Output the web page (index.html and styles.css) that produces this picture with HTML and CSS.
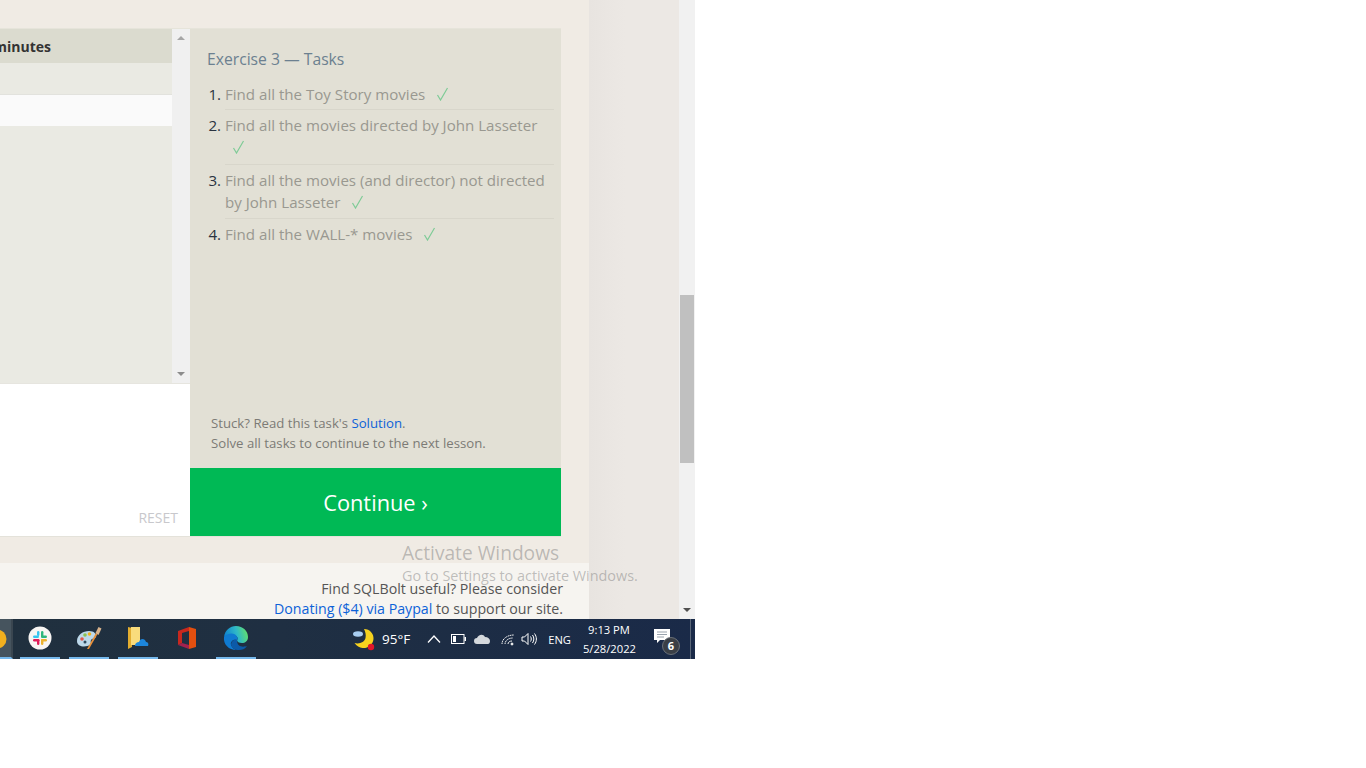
FILE: index.html
```html
<!DOCTYPE html>
<html lang="en">
<head>
    <meta charset="UTF-8">
    <title>SQLBolt - Exercise 3</title>
    <link rel="stylesheet" href="styles.css">
</head>
<body>
    <div class="screen">
        <div class="browser">
            <div class="page">
                <div class="main">
                    <div class="exercise">
                        <div class="left">
                            <div class="viewer">
                                <div class="results">
                                    <div class="results-head"><b>Length_minutes</b></div>
                                    <div class="results-row"></div>
                                    <div class="results-row white"></div>
                                    <div class="results-rest"></div>
                                </div>
                                <div class="mini-scroll">
                                    <span class="arrow up small"></span>
                                    <span class="arrow down small"></span>
                                </div>
                            </div>
                            <div class="editor"><span class="reset">RESET</span></div>
                        </div>
                        <div class="tasks">
                            <div class="tasks-body">
                                <h3>Exercise 3 — Tasks</h3>
                                <ol>
                                    <li>Find all the Toy Story movies <svg class="check" width="13" height="14" viewBox="0 0 13 14"><path d="M1.500 8l3 5L11.500 1" fill="none" stroke="#7ecb96" stroke-width="1.200"/></svg></li>
                                    <li>Find all the movies directed by John Lasseter <svg class="check" width="13" height="14" viewBox="0 0 13 14"><path d="M1.500 8l3 5L11.500 1" fill="none" stroke="#7ecb96" stroke-width="1.200"/></svg></li>
                                    <li>Find all the movies (and director) not directed by John Lasseter <svg class="check" width="13" height="14" viewBox="0 0 13 14"><path d="M1.500 8l3 5L11.500 1" fill="none" stroke="#7ecb96" stroke-width="1.200"/></svg></li>
                                    <li class="last">Find all the WALL-* movies <svg class="check" width="13" height="14" viewBox="0 0 13 14"><path d="M1.500 8l3 5L11.500 1" fill="none" stroke="#7ecb96" stroke-width="1.200"/></svg></li>
                                </ol>
                                <div class="hint">
                                    <div>Stuck? Read this task's <a href="#">Solution</a>.</div>
                                    <div>Solve all tasks to continue to the next lesson.</div>
                                </div>
                            </div>
                            <a class="continue" href="#">Continue ›</a>
                        </div>
                    </div>
                    <div class="footer">
                        <div>Find SQLBolt useful? Please consider</div>
                        <div><a href="#">Donating ($4) via Paypal</a> to support our site.</div>
                    </div>
                </div>
                <div class="side"></div>
            </div>
            <div class="scrollbar">
                <div class="thumb"></div>
                <span class="arrow down"></span>
            </div>
            <div class="watermark">
                <div class="wm-title">Activate Windows</div>
                <div class="wm-sub">Go to Settings to activate Windows.</div>
            </div>
        </div>
        <div class="taskbar">
            <div class="active-app">
                <svg width="11" height="38" viewBox="0 0 11 38"><circle cx="-3" cy="20" r="9.500" fill="#f2b01e"/></svg>
            </div>
            <div class="app open">
                <svg width="26" height="26" viewBox="0 0 26 26">
                    <circle cx="13" cy="13" r="11.500" fill="#f8f5f3"/>
                    <rect x="6" y="10.500" width="6" height="2.400" rx="1.200" fill="#36c5f0"/>
                    <rect x="10" y="6" width="2.400" height="5" rx="1.200" fill="#36c5f0"/>
                    <rect x="14" y="6" width="2.400" height="6.500" rx="1.200" fill="#2eb67d"/>
                    <rect x="14" y="10.500" width="6" height="2.400" rx="1.200" fill="#2eb67d"/>
                    <rect x="14" y="14" width="6" height="2.400" rx="1.200" fill="#ecb22e"/>
                    <rect x="14" y="14" width="2.400" height="6" rx="1.200" fill="#ecb22e"/>
                    <rect x="6" y="14" width="6.400" height="2.400" rx="1.200" fill="#e01e5a"/>
                    <rect x="10" y="14" width="2.400" height="6" rx="1.200" fill="#e01e5a"/>
                </svg>
            </div>
            <div class="app open">
                <svg width="28" height="28" viewBox="0 0 28 28">
                    <path d="M2 17c0-6 6-10 12-10 5 0 8 3 7 6-1 2-4 1-5 3s1 3-1 5c-3 2-13 3-13-4z" fill="#bcd8ea"/>
                    <circle cx="7" cy="15" r="1.800" fill="#e2574c"/>
                    <circle cx="10" cy="11" r="1.800" fill="#8cc152"/>
                    <circle cx="14.500" cy="10" r="1.800" fill="#f2b01e"/>
                    <circle cx="10" cy="18" r="1.500" fill="#2d4a5e"/>
                    <path d="M12 25l9-16 1.500 1L14 25z" fill="#e8903a"/>
                    <path d="M20.500 9l3-6 3 1.500-3 6.500z" fill="#d9b38c"/>
                </svg>
            </div>
            <div class="app open">
                <svg width="22" height="24" viewBox="0 0 22 24">
                    <path d="M1 1l4 1v19l-4 2z" fill="#e3ad2f"/>
                    <path d="M4 1h9v18H4z" fill="#f9dc7c"/>
                    <path d="M8 20c0-3 2-4 4-4 1-4 6-4 7 0 2 0 3 2 2 4z" fill="#1c86dc"/>
                </svg>
            </div>
            <div class="app">
                <svg width="20" height="24" viewBox="0 0 20 24">
                    <path d="M1 5L12 1v4L5 7v10l-4 2z" fill="#c8281e"/>
                    <path d="M1 19l4-2 7 2v4z" fill="#a3214e"/>
                    <path d="M12 1l7 2v18l-7 2z" fill="#e34f0f"/>
                </svg>
            </div>
            <div class="app open">
                <svg width="26" height="26" viewBox="0 0 26 26">
                    <defs>
                        <linearGradient id="edgeTop" x1="0" y1="0.600" x2="1" y2="0.400">
                            <stop offset="0" stop-color="#0d7fd0"/>
                            <stop offset="0.550" stop-color="#2fb8c8"/>
                            <stop offset="1" stop-color="#62e06c"/>
                        </linearGradient>
                    </defs>
                    <path d="M1 12C2 5 7 1 13 1c7 0 12 5 12 11 0 4-3 6-6 6-3 0-5-1-5-3 1-1 1-2 0-3-2-3-9-3-13 0z" fill="url(#edgeTop)"/>
                    <path d="M1 12c3-4 11-5 13 0 1 1 1 2 0 3-3-1-7 1-6 5 1 3 4 5 7 5C7 26 0 20 1 12z" fill="#0f7ad1"/>
                    <path d="M14 15c-3-1-6 1-6 5 1 3 4 5 8 5 3 0 6-1 8-4-3 1-10 2-10-6z" fill="#0c5aa8"/>
                </svg>
            </div>
            <div class="tray">
                <svg class="moon" width="24" height="24" viewBox="0 0 24 24">
                    <path d="M13 2c6 0 10 5 9.500 10-.5 6-6 9.500-11 9-3-.3-6-2-8-5 5 1.500 10-1 11-5 .7-3 0-6-1.500-9z" fill="#f6d21f"/>
                    <ellipse cx="7" cy="7" rx="5" ry="2.800" fill="#a8cdf0"/>
                    <circle cx="20" cy="20" r="3.200" fill="#e0162b"/>
                </svg>
                <span class="temp">95°F</span>
                <svg class="chevron" width="14" height="8" viewBox="0 0 14 8"><path d="M1 7.500L7 1l6 6.500" fill="none" stroke="#fff" stroke-width="1.300"/></svg>
                <svg class="battery" width="15" height="10" viewBox="0 0 15 10">
                    <rect x="0.500" y="0.500" width="12.500" height="9" fill="none" stroke="#fff"/>
                    <rect x="2" y="2" width="3" height="6" fill="#fff"/>
                    <rect x="13.500" y="3" width="1.500" height="4" fill="#fff"/>
                </svg>
                <svg class="cloud" width="16" height="10" viewBox="0 0 16 10"><path d="M3 10a3 3 0 0 1 0-6c1-3 6-5 8-1 3 0 5 2 5 4s-1 3-2 3z" fill="#d4d8dc"/></svg>
                <svg class="wifi" width="14" height="14" viewBox="0 0 14 14" fill="none" stroke="#f2f2f2">
                    <path d="M1 12C1 7 6 3 13 3" stroke-dasharray="1.500 0.600"/>
                    <path d="M4 12c0-3 3-6 8-6" stroke-dasharray="1.500 0.600"/>
                    <path d="M7 12c0-2 2-3 4-3"/>
                    <circle cx="11" cy="12" r="1" fill="#fff"/>
                </svg>
                <svg class="speaker" width="16" height="14" viewBox="0 0 16 14" fill="none" stroke="#fff">
                    <path d="M1 5h2.500L7 1.500v11L3.500 9H1z"/>
                    <path d="M9.500 4.500c1 1.500 1 3.500 0 5M11.500 3c1.800 2.500 1.800 5.500 0 8M13.500 1.500c2.500 3.500 2.500 7.500 0 11"/>
                </svg>
                <span class="lang">ENG</span>
                <div class="clock">
                    <div>9:13 PM</div>
                    <div>5/28/2022</div>
                </div>
                <div class="notify">
                    <svg width="16" height="14" viewBox="0 0 16 14">
                        <path d="M0 0h16v11H6l-3 3v-3H0z" fill="#fff"/>
                        <path d="M3 3h10M3 5.500h10M3 8h7" stroke="#9aa3ad"/>
                    </svg>
                    <span class="badge">6</span>
                </div>
                <div class="show-desktop"></div>
            </div>
        </div>
    </div>
</body>
</html>
```

FILE: styles.css
```css
* {
    box-sizing: border-box;
}
html, body {
    margin: 0;
    background: #fff;
}
body {
    font-family: "Open Sans", sans-serif;
}
a {
    text-decoration: none;
    color: #0d62d8;
}
.screen {
    width: 695px;
    height: 659px;
    display: flex;
    flex-direction: column;
    overflow: hidden;
}
.browser {
    position: relative;
    height: 619px;
    display: flex;
    flex-shrink: 0;
}
.page {
    width: 679px;
    display: flex;
}
.main {
    width: 589px;
    display: flex;
    flex-direction: column;
    background: #f0ebe4;
}
.side {
    flex: 1;
    background: linear-gradient(to right, #e8e4e0, #ece8e4 40%);
}
.exercise {
    margin-top: 28px;
    width: 561px;
    height: 509px;
    flex-shrink: 0;
    display: flex;
    border-top: 1px solid #e6e4da;
    border-bottom: 1px solid #e4e2da;
}
.left {
    width: 190px;
    display: flex;
    flex-direction: column;
    background: #fff;
}
.viewer {
    height: 355px;
    display: flex;
    border-bottom: 1px solid #e6e5df;
}
.results {
    width: 172px;
    display: flex;
    flex-direction: column;
    overflow: hidden;
    background: #eaeae3;
}
.results-head {
    height: 34px;
    flex-shrink: 0;
    display: flex;
    justify-content: flex-end;
    align-items: center;
    padding-right: 121px;
    background: #dbdbcf;
    font-size: 14px;
    color: #333;
    white-space: nowrap;
}
.results-row {
    height: 31px;
    flex-shrink: 0;
}
.results-row.white {
    height: 32px;
    background: #fafafa;
    border-top: 1px solid #e2e2dd;
}
.results-rest {
    flex: 1;
}
.mini-scroll {
    width: 18px;
    background: #f0f0f0;
    display: flex;
    flex-direction: column;
    justify-content: space-between;
    align-items: center;
    padding: 7px 0 7px;
}
.arrow {
    display: block;
    width: 0;
    height: 0;
    border-left: 4px solid transparent;
    border-right: 4px solid transparent;
}
.arrow.up {
    border-bottom: 4px solid #a6a6a6;
}
.arrow.down {
    border-top: 4px solid #505050;
}
.arrow.small.down {
    border-top-color: #8c8c8c;
}
.editor {
    flex: 1;
    display: flex;
    justify-content: flex-end;
    align-items: flex-end;
    padding: 0 12px 9px 0;
}
.reset {
    font-size: 14px;
    line-height: 19px;
    color: #c8c8cc;
}
.tasks {
    width: 371px;
    display: flex;
    flex-direction: column;
    background: #e2e0d5;
}
.tasks-body {
    flex: 1;
    display: flex;
    flex-direction: column;
    padding: 18px 7px 15px 17px;
}
.tasks h3 {
    margin: 0;
    font-size: 15.700px;
    font-weight: 400;
    line-height: 24px;
    color: #6c8090;
}
.tasks ol {
    margin: 12px 0 0;
    padding: 0 0 0 18px;
    font-size: 15.100px;
    line-height: 22px;
    color: #999890;
}
.tasks li {
    padding: 0 0 5px;
    margin-bottom: 4px;
    border-bottom: 1px solid #d8d6cb;
}
.tasks li:first-child {
    padding-bottom: 4px;
}
.tasks li:nth-child(2) {
    padding-bottom: 6px;
}
.tasks li.last {
    border-bottom: 0;
}
.tasks li::marker {
    color: #2a3340;
}
.check {
    margin-left: 7px;
    vertical-align: -1px;
}
.hint {
    margin-top: auto;
    padding-left: 4px;
    font-size: 13.200px;
    line-height: 20px;
    color: #7c7b76;
}
.continue {
    height: 68px;
    flex-shrink: 0;
    display: flex;
    justify-content: center;
    align-items: center;
    background: #00b955;
    color: #fff;
    font-size: 21.800px;
}
.footer {
    margin-top: 26px;
    flex: 1;
    padding: 16px 26px 0 0;
    background: #f6f4f0;
    text-align: right;
    font-size: 14.200px;
    line-height: 20px;
    color: #555;
}
.scrollbar {
    width: 16px;
    position: relative;
    display: flex;
    flex-direction: column;
    align-items: center;
    background: #f1f1f1;
}
.thumb {
    width: 14px;
    height: 168px;
    margin-top: 295px;
    background: #c0c0c0;
}
.scrollbar .arrow {
    margin-top: auto;
    margin-bottom: 7px;
}
.watermark {
    position: absolute;
    left: 402px;
    top: 539px;
    color: rgba(120, 120, 120, 0.45);
    white-space: nowrap;
}
.wm-title {
    font-size: 19.150px;
    line-height: 28px;
}
.wm-sub {
    font-size: 14.400px;
    line-height: 18px;
}
.taskbar {
    height: 40px;
    display: flex;
    background: linear-gradient(to right, #20303e, #1f2f42 40%, #1a2a48);
    color: #fff;
}
.active-app {
    width: 13px;
    height: 40px;
    margin-right: 7px;
    background: #46545e;
    border-right: 2px solid #3a4650;
    border-bottom: 2px solid #76b9ed;
}
.active-app svg {
    display: block;
}
.app {
    width: 40px;
    height: 40px;
    margin-right: 9px;
    display: flex;
    justify-content: center;
    align-items: center;
    border-bottom: 2px solid transparent;
}
.app.open {
    border-bottom-color: #76b9ed;
}
.tray {
    flex: 1;
    display: flex;
    align-items: center;
    margin-left: 88px;
}
.tray svg {
    flex-shrink: 0;
}
.moon {
    margin-left: -2px;
}
.temp {
    margin-left: 7px;
    font-size: 13.500px;
}
.chevron {
    margin-left: 17px;
}
.battery {
    margin-left: 10px;
}
.cloud {
    margin-left: 8px;
}
.wifi {
    margin-left: 11px;
}
.speaker {
    margin-left: 6px;
}
.lang {
    margin-left: 11px;
    font-size: 11.200px;
}
.clock {
    margin-left: 12px;
    width: 52px;
    font-size: 11.200px;
    line-height: 19px;
    text-align: center;
}
.notify {
    position: relative;
    margin-left: 19px;
    width: 22px;
    height: 24px;
    padding-top: 2px;
}
.notify svg {
    display: block;
}
.badge {
    position: absolute;
    right: -4px;
    bottom: -4px;
    width: 18px;
    height: 18px;
    border-radius: 50%;
    background: #3a3f46;
    border: 1px solid #6a7078;
    font-size: 11px;
    font-weight: 700;
    line-height: 16px;
    text-align: center;
}
.show-desktop {
    margin-left: auto;
    width: 5px;
    height: 40px;
    border-left: 1px solid #5a6678;
}
```
